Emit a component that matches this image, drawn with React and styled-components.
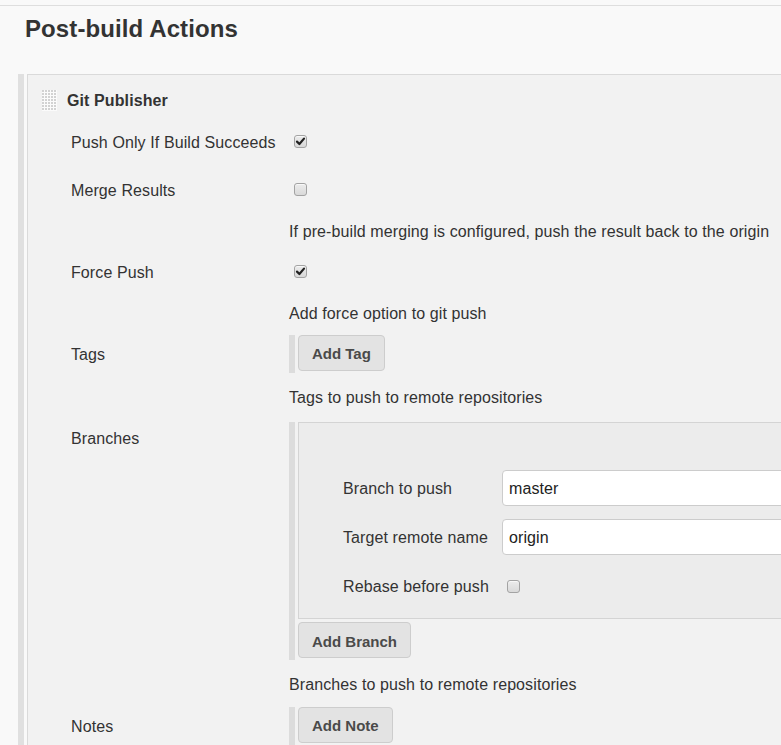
import React from "react";
import styled, { createGlobalStyle } from "styled-components";

const Global = createGlobalStyle`
  html, body { margin: 0; padding: 0; overflow: hidden; background: #f9f9f9; }
  body { font-family: "Liberation Sans", Arial, Helvetica, sans-serif; color: #333; letter-spacing: 0.1px; }
`;

const Page = styled.div`
  width: 1100px;
  padding-top: 5px;
`;

const TopRule = styled.div`
  border-top: 1px solid #dedede;
`;

const Title = styled.h1`
  margin: 9px 0 31px 25px;
  font-size: 24px;
  line-height: 28px;
  font-weight: bold;
  color: #333;
`;

const SectionWrap = styled.div`
  margin-left: 18px;
  border-left: 6px solid #e0e0e0;
  padding-left: 3px;
`;

const Panel = styled.div`
  background: #f2f2f2;
  border-top: 1px solid #dadada;
  border-left: 1px solid #dadada;
  padding-bottom: 20px;
`;

const PanelHeader = styled.div`
  display: flex;
  align-items: center;
  height: 42px;
  padding-top: 4px;
  padding-left: 14px;
  gap: 10px;
  font-size: 16px;
  font-weight: bold;
  color: #333;
`;

const HeaderText = styled.span`
  padding-top: 2px;
`;

const Rows = styled.div`
  display: flex;
  flex-direction: column;
  padding-left: 43px;
`;

const Row = styled.div`
  display: grid;
  grid-template-columns: 218px 1fr;
  align-items: ${(p) => (p.$top ? "start" : "center")};
  min-height: 41px;
  margin-top: ${(p) => p.$gap || 0}px;
  font-size: 16px;
  line-height: 18px;
`;

const Label = styled.div`
  color: #333;
  padding-top: ${(p) => (p.$padTop !== undefined ? p.$padTop : 2)}px;
`;

const Help = styled.div`
  grid-column: 2;
  color: #333;
  padding-top: 2px;
`;

const Bar = styled.div`
  display: flex;
  flex-direction: column;
  align-items: flex-start;
  border-left: 6px solid #dcdcdc;
  padding-left: 3px;
  padding-bottom: 2px;
`;

const Button = styled.button`
  height: 36px;
  margin-top: ${(p) => p.$gap || 0}px;
  padding: 2px 13px 0;
  border: 1px solid #cdcdcd;
  border-radius: 4px;
  background: #e3e3e3;
  font-family: "Liberation Sans", Arial, Helvetica, sans-serif;
  font-size: 15px;
  font-weight: bold;
  color: #4a4a4a;
`;

const Chunk = styled.div`
  align-self: stretch;
  background: #ececec;
  border: 1px solid #d4d4d4;
  padding: 47px 0 14px 44px;
  display: grid;
  grid-template-columns: 159px 1fr;
  row-gap: 13px;
  align-items: center;
`;

const ChunkLabel = styled.div`
  color: #333;
  height: 34px;
  padding-top: 2px;
  display: flex;
  align-items: center;
`;

const TextInput = styled.div`
  height: 32px;
  padding: 2px 0 0 6px;
  background: #fff;
  border: 1px solid #cccccc;
  border-radius: 4px;
  display: flex;
  align-items: center;
  color: #222;
  font-size: 16px;
`;

const BoxWrap = styled.span`
  display: inline-flex;
  align-items: center;
  justify-content: center;
  width: 11px;
  height: 11px;
  margin-left: ${(p) => p.$offset || 5}px;
  border: 1px solid #a3a3a3;
  border-radius: 3px;
  background: linear-gradient(#ececec, #d9d9d9);
  box-shadow: inset 0 1px 0 #f8f8f8;
`;

const Check = ({ checked, offset }) => (
  <BoxWrap role="checkbox" aria-checked={checked} $offset={offset}>
    {checked && (
      <svg width="11" height="11" viewBox="0 0 11 11">
        <path d="M2 5.6 L4.4 8 L9 2.6" fill="none" stroke="#222" strokeWidth="2.2" strokeLinecap="round" strokeLinejoin="round" />
      </svg>
    )}
  </BoxWrap>
);

const Handle = () => (
  <svg width="15" height="21" viewBox="0 0 15 21">
    <rect width="15" height="21" fill="#fbfbfb" />
    {Array.from({ length: 7 }).map((_, r) =>
      Array.from({ length: 5 }).map((_, c) => (
        <rect key={`${r}-${c}`} x={c * 3} y={r * 3} width="2" height="2" fill="#d2d2d2" />
      ))
    )}
  </svg>
);

const CheckCell = styled.div`
  display: flex;
  align-items: center;
`;

export default function App() {
  return (
    <>
      <Global />
      <Page>
        <TopRule />
        <Title>Post-build Actions</Title>
        <SectionWrap>
          <Panel>
            <PanelHeader>
              <Handle />
              <HeaderText>Git Publisher</HeaderText>
            </PanelHeader>
            <Rows>
              <Row>
                <Label>Push Only If Build Succeeds</Label>
                <CheckCell><Check checked /></CheckCell>
              </Row>
              <Row $gap={7}>
                <Label>Merge Results</Label>
                <CheckCell><Check /></CheckCell>
              </Row>
              <Row>
                <Help>If pre-build merging is configured, push the result back to the origin</Help>
              </Row>
              <Row>
                <Label>Force Push</Label>
                <CheckCell><Check checked /></CheckCell>
              </Row>
              <Row>
                <Help>Add force option to git push</Help>
              </Row>
              <Row>
                <Label>Tags</Label>
                <Bar><Button>Add Tag</Button></Bar>
              </Row>
              <Row $gap={2}>
                <Help>Tags to push to remote repositories</Help>
              </Row>
              <Row $gap={5} $top>
                <Label $padTop={8}>Branches</Label>
                <Bar>
                  <Chunk>
                    <ChunkLabel>Branch to push</ChunkLabel>
                    <TextInput>master</TextInput>
                    <ChunkLabel>Target remote name</ChunkLabel>
                    <TextInput>origin</TextInput>
                    <ChunkLabel>Rebase before push</ChunkLabel>
                    <CheckCell><Check /></CheckCell>
                  </Chunk>
                  <Button $gap={3}>Add Branch</Button>
                </Bar>
              </Row>
              <Row $gap={3}>
                <Help>Branches to push to remote repositories</Help>
              </Row>
              <Row $gap={1}>
                <Label>Notes</Label>
                <Bar><Button>Add Note</Button></Bar>
              </Row>
            </Rows>
          </Panel>
        </SectionWrap>
      </Page>
    </>
  );
}
